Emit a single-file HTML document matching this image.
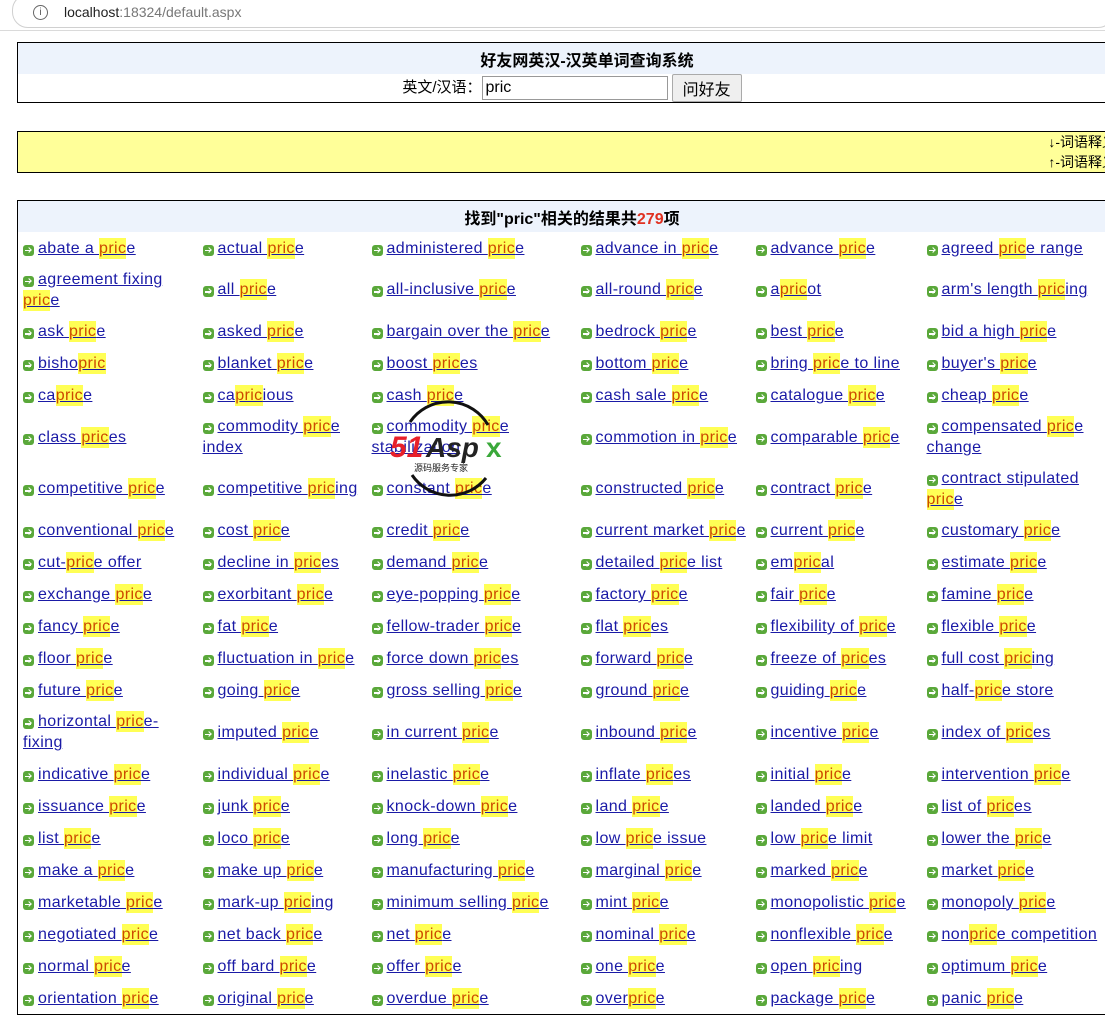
<!DOCTYPE html>
<html><head><meta charset="utf-8">
<style>
body{margin:0;width:1105px;height:1017px;overflow:hidden;background:#fff;font-family:"Liberation Sans","Noto Sans CJK SC",sans-serif;font-size:16px;position:relative}
.bar{position:absolute;left:0;top:0;width:1105px;height:30px;background:#fff;border-bottom:1px solid #dadada}
.pill{position:absolute;left:12px;top:-6px;width:1100px;height:32px;border:1px solid #d0d0d0;border-radius:16px;background:#fff}
.info{position:absolute;left:33px;top:5px;width:13px;height:13px;border:1px solid #666;border-radius:50%;font-size:10px;line-height:13px;text-align:center;color:#555}
.url{position:absolute;left:64px;top:4px;font-size:14px;color:#222}
.url span{color:#777}
table{border-collapse:collapse}
.t1{position:absolute;left:17px;top:42px;width:1140px;height:61px;border:1px solid #000}
.t1 td{text-align:center;padding:0}
.hd{background:#edf3fc;height:31px;font-weight:bold;font-size:16px;vertical-align:bottom;line-height:24px}
.in{height:28px;font-size:15px}
.in input{width:178px;height:22px;border:1px solid #999;font-size:16px;padding:0 3px;vertical-align:middle;font-family:"Liberation Sans",sans-serif;margin:0}
.in button{height:28px;width:70px;font-size:16px;vertical-align:middle;background:#efefef;border:1px solid #aaa;border-radius:2px;font-family:"Liberation Sans","Noto Sans CJK SC",sans-serif;padding:0}
.t2{position:absolute;left:17px;top:131px;width:1140px;height:41px;border:1px solid #000;background:#ffff99}
.t2 td{text-align:right;font-size:14px;line-height:20px;padding:0 40px 0 0}
.t3{position:absolute;left:17px;top:200px;width:1140px;border:1px solid #000;table-layout:fixed;letter-spacing:0.4px}
.t3 .h td{background:#edf3fc;height:31px;text-align:center;font-weight:bold;vertical-align:bottom;line-height:24px;letter-spacing:0;padding:0 30px 0 0}
.t3 .h em{font-style:normal;color:#e03020}
.t3 td{padding:0 0 0 5px;height:32px;vertical-align:middle;line-height:21px}
.t3 td:nth-child(6){padding-right:54px}
.t3 tr.d td{height:51.5px}
a{color:#1a1aa6;text-decoration:underline}
a b{background:#ffff55;color:#cc4a00;font-weight:normal;padding:2px 0}
i{display:inline-block;width:11px;height:11px;background:#5aa83a;border-radius:3px;margin-right:4px;vertical-align:-3px;position:relative}
i:after{content:"";position:absolute;left:2px;top:5px;width:6px;height:1.5px;background:#fff}
i:before{content:"";position:absolute;left:4px;top:3px;width:3px;height:3px;border-top:1.5px solid #fff;border-right:1.5px solid #fff;transform:rotate(45deg)}
.wm{position:absolute;left:388px;top:400px}
</style></head><body>
<div class="bar"><div class="pill"></div><div class="info">i</div><div class="url">localhost<span>:18324/default.aspx</span></div></div>
<table class="t1"><tr><td class="hd">好友网英汉-汉英单词查询系统</td></tr>
<tr><td class="in" style="padding-right:30px">英文/汉语：<input value="pric"> <button>问好友</button></td></tr></table>
<table class="t2"><tr><td>↓-词语释义<br>↑-词语释义</td></tr></table>
<table class="t3">
<colgroup><col style="width:180px"><col style="width:169px"><col style="width:209px"><col style="width:175px"><col style="width:171px"><col></colgroup>
<tr class="h"><td colspan="6">找到"pric"相关的结果共<em>279</em>项</td></tr>
<tr><td><i></i><a>abate a <b>pric</b>e</a></td><td><i></i><a>actual <b>pric</b>e</a></td><td><i></i><a>administered <b>pric</b>e</a></td><td><i></i><a>advance in <b>pric</b>e</a></td><td><i></i><a>advance <b>pric</b>e</a></td><td><i></i><a>agreed <b>pric</b>e range</a></td></tr>
<tr class="d"><td><i></i><a>agreement fixing <b>pric</b>e</a></td><td><i></i><a>all <b>pric</b>e</a></td><td><i></i><a>all-inclusive <b>pric</b>e</a></td><td><i></i><a>all-round <b>pric</b>e</a></td><td><i></i><a>a<b>pric</b>ot</a></td><td><i></i><a>arm's length <b>pric</b>ing</a></td></tr>
<tr><td><i></i><a>ask <b>pric</b>e</a></td><td><i></i><a>asked <b>pric</b>e</a></td><td><i></i><a>bargain over the <b>pric</b>e</a></td><td><i></i><a>bedrock <b>pric</b>e</a></td><td><i></i><a>best <b>pric</b>e</a></td><td><i></i><a>bid a high <b>pric</b>e</a></td></tr>
<tr><td><i></i><a>bisho<b>pric</b></a></td><td><i></i><a>blanket <b>pric</b>e</a></td><td><i></i><a>boost <b>pric</b>es</a></td><td><i></i><a>bottom <b>pric</b>e</a></td><td><i></i><a>bring <b>pric</b>e to line</a></td><td><i></i><a>buyer's <b>pric</b>e</a></td></tr>
<tr><td><i></i><a>ca<b>pric</b>e</a></td><td><i></i><a>ca<b>pric</b>ious</a></td><td><i></i><a>cash <b>pric</b>e</a></td><td><i></i><a>cash sale <b>pric</b>e</a></td><td><i></i><a>catalogue <b>pric</b>e</a></td><td><i></i><a>cheap <b>pric</b>e</a></td></tr>
<tr class="d"><td><i></i><a>class <b>pric</b>es</a></td><td><i></i><a>commodity <b>pric</b>e index</a></td><td><i></i><a>commodity <b>pric</b>e stabilization</a></td><td><i></i><a>commotion in <b>pric</b>e</a></td><td><i></i><a>comparable <b>pric</b>e</a></td><td><i></i><a>compensated <b>pric</b>e change</a></td></tr>
<tr class="d"><td><i></i><a>competitive <b>pric</b>e</a></td><td><i></i><a>competitive <b>pric</b>ing</a></td><td><i></i><a>constant <b>pric</b>e</a></td><td><i></i><a>constructed <b>pric</b>e</a></td><td><i></i><a>contract <b>pric</b>e</a></td><td><i></i><a>contract stipulated <b>pric</b>e</a></td></tr>
<tr><td><i></i><a>conventional <b>pric</b>e</a></td><td><i></i><a>cost <b>pric</b>e</a></td><td><i></i><a>credit <b>pric</b>e</a></td><td><i></i><a>current market <b>pric</b>e</a></td><td><i></i><a>current <b>pric</b>e</a></td><td><i></i><a>customary <b>pric</b>e</a></td></tr>
<tr><td><i></i><a>cut-<b>pric</b>e offer</a></td><td><i></i><a>decline in <b>pric</b>es</a></td><td><i></i><a>demand <b>pric</b>e</a></td><td><i></i><a>detailed <b>pric</b>e list</a></td><td><i></i><a>em<b>pric</b>al</a></td><td><i></i><a>estimate <b>pric</b>e</a></td></tr>
<tr><td><i></i><a>exchange <b>pric</b>e</a></td><td><i></i><a>exorbitant <b>pric</b>e</a></td><td><i></i><a>eye-popping <b>pric</b>e</a></td><td><i></i><a>factory <b>pric</b>e</a></td><td><i></i><a>fair <b>pric</b>e</a></td><td><i></i><a>famine <b>pric</b>e</a></td></tr>
<tr><td><i></i><a>fancy <b>pric</b>e</a></td><td><i></i><a>fat <b>pric</b>e</a></td><td><i></i><a>fellow-trader <b>pric</b>e</a></td><td><i></i><a>flat <b>pric</b>es</a></td><td><i></i><a>flexibility of <b>pric</b>e</a></td><td><i></i><a>flexible <b>pric</b>e</a></td></tr>
<tr><td><i></i><a>floor <b>pric</b>e</a></td><td><i></i><a>fluctuation in <b>pric</b>e</a></td><td><i></i><a>force down <b>pric</b>es</a></td><td><i></i><a>forward <b>pric</b>e</a></td><td><i></i><a>freeze of <b>pric</b>es</a></td><td><i></i><a>full cost <b>pric</b>ing</a></td></tr>
<tr><td><i></i><a>future <b>pric</b>e</a></td><td><i></i><a>going <b>pric</b>e</a></td><td><i></i><a>gross selling <b>pric</b>e</a></td><td><i></i><a>ground <b>pric</b>e</a></td><td><i></i><a>guiding <b>pric</b>e</a></td><td><i></i><a>half-<b>pric</b>e store</a></td></tr>
<tr class="d"><td><i></i><a>horizontal <b>pric</b>e-fixing</a></td><td><i></i><a>imputed <b>pric</b>e</a></td><td><i></i><a>in current <b>pric</b>e</a></td><td><i></i><a>inbound <b>pric</b>e</a></td><td><i></i><a>incentive <b>pric</b>e</a></td><td><i></i><a>index of <b>pric</b>es</a></td></tr>
<tr><td><i></i><a>indicative <b>pric</b>e</a></td><td><i></i><a>individual <b>pric</b>e</a></td><td><i></i><a>inelastic <b>pric</b>e</a></td><td><i></i><a>inflate <b>pric</b>es</a></td><td><i></i><a>initial <b>pric</b>e</a></td><td><i></i><a>intervention <b>pric</b>e</a></td></tr>
<tr><td><i></i><a>issuance <b>pric</b>e</a></td><td><i></i><a>junk <b>pric</b>e</a></td><td><i></i><a>knock-down <b>pric</b>e</a></td><td><i></i><a>land <b>pric</b>e</a></td><td><i></i><a>landed <b>pric</b>e</a></td><td><i></i><a>list of <b>pric</b>es</a></td></tr>
<tr><td><i></i><a>list <b>pric</b>e</a></td><td><i></i><a>loco <b>pric</b>e</a></td><td><i></i><a>long <b>pric</b>e</a></td><td><i></i><a>low <b>pric</b>e issue</a></td><td><i></i><a>low <b>pric</b>e limit</a></td><td><i></i><a>lower the <b>pric</b>e</a></td></tr>
<tr><td><i></i><a>make a <b>pric</b>e</a></td><td><i></i><a>make up <b>pric</b>e</a></td><td><i></i><a>manufacturing <b>pric</b>e</a></td><td><i></i><a>marginal <b>pric</b>e</a></td><td><i></i><a>marked <b>pric</b>e</a></td><td><i></i><a>market <b>pric</b>e</a></td></tr>
<tr><td><i></i><a>marketable <b>pric</b>e</a></td><td><i></i><a>mark-up <b>pric</b>ing</a></td><td><i></i><a>minimum selling <b>pric</b>e</a></td><td><i></i><a>mint <b>pric</b>e</a></td><td><i></i><a>monopolistic <b>pric</b>e</a></td><td><i></i><a>monopoly <b>pric</b>e</a></td></tr>
<tr><td><i></i><a>negotiated <b>pric</b>e</a></td><td><i></i><a>net back <b>pric</b>e</a></td><td><i></i><a>net <b>pric</b>e</a></td><td><i></i><a>nominal <b>pric</b>e</a></td><td><i></i><a>nonflexible <b>pric</b>e</a></td><td><i></i><a>non<b>pric</b>e competition</a></td></tr>
<tr><td><i></i><a>normal <b>pric</b>e</a></td><td><i></i><a>off bard <b>pric</b>e</a></td><td><i></i><a>offer <b>pric</b>e</a></td><td><i></i><a>one <b>pric</b>e</a></td><td><i></i><a>open <b>pric</b>ing</a></td><td><i></i><a>optimum <b>pric</b>e</a></td></tr>
<tr><td><i></i><a>orientation <b>pric</b>e</a></td><td><i></i><a>original <b>pric</b>e</a></td><td><i></i><a>overdue <b>pric</b>e</a></td><td><i></i><a>over<b>pric</b>e</a></td><td><i></i><a>package <b>pric</b>e</a></td><td><i></i><a>panic <b>pric</b>e</a></td></tr>
</table>
<svg class="wm" width="130" height="100" viewBox="0 0 130 100">
<path d="M22 22 A46 46 0 0 1 100 25" fill="none" stroke="#111" stroke-width="3"/>
<path d="M24 75 A46 46 0 0 0 98 78" fill="none" stroke="#111" stroke-width="3"/>
<text x="2" y="57" font-family="Liberation Sans,sans-serif" font-weight="bold" font-style="italic" font-size="30" fill="#e8202a">51</text>
<text x="38" y="57" font-family="Liberation Sans,sans-serif" font-weight="bold" font-style="italic" font-size="28" fill="#222">Asp</text>
<text x="98" y="57" font-family="Liberation Sans,sans-serif" font-weight="bold" font-size="28" fill="#3aa83a">x</text>
<text x="26" y="71" font-family="Noto Sans CJK SC,sans-serif" font-size="9" fill="#222">源码服务专家</text>
</svg>
</body></html>
